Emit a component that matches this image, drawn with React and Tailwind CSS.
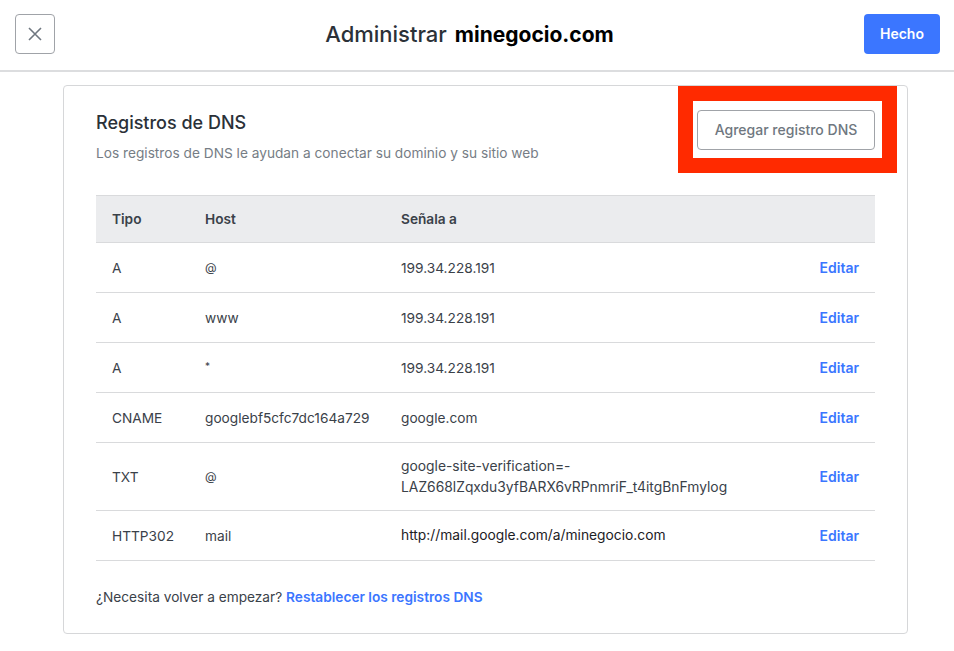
const ROWS = [
  { tipo: 'A', host: '@', points: '199.34.228.191', hostClass: 'pb-[1px] text-xs' },
  { tipo: 'A', host: 'www', points: '199.34.228.191' },
  { tipo: 'A', host: '*', points: '199.34.228.191', hostClass: 'pb-[3px] text-[10px]' },
  { tipo: 'CNAME', host: 'googlebf5cfc7dc164a729', points: 'google.com' },
  { tipo: 'TXT', host: '@', points: 'google-site-verification=-\nLAZ668lZqxdu3yfBARX6vRPnmriF_t4itgBnFmylog', hostClass: 'pb-[1px] text-xs', tall: true },
  { tipo: 'HTTP302', host: 'mail', points: 'http://mail.google.com/a/minegocio.com', dark: true },
];

export default function App() {
  return (
    <div className="relative h-[651px] w-[954px] overflow-hidden bg-white font-['Inter',sans-serif] text-[#3a4149]">
      {/* Header */}
      <header className="flex h-[72px] items-start justify-between border-b-2 border-[#dcdddf] pt-[14px] pr-[14px] pl-[15px]">
        <button className="flex h-10 w-10 items-center justify-center rounded border border-[#a0a3a8] text-[#6f7780]">
          <svg className="h-4 w-4" fill="none" stroke="currentColor" viewBox="0 0 16 16">
            <path strokeWidth={1.6} d="M2 2l12 12M14 2L2 14" />
          </svg>
        </button>
        <h1 className="mt-[6px] ml-[20px] flex items-baseline gap-2 text-[22px] leading-[28px] font-medium text-[#2b3138]">
          Administrar <span className="text-[21px] font-bold text-black">minegocio.com</span>
        </h1>
        <button className="h-10 w-[76px] rounded bg-[#3b76ff] text-sm font-semibold text-white">Hecho</button>
      </header>

      {/* Card */}
      <main className="mt-[13px] ml-[63px] h-[549px] w-[845px] rounded border border-[#d6d7d9] px-8">
        <div className="flex items-start justify-between pt-[24px]">
          <div>
            <h2 className="mt-[1px] text-lg leading-6 font-medium text-[#2b3138]">Registros de DNS</h2>
            <p className="mt-[8px] text-[13.7px] leading-5 text-[#767d85]">
              Los registros de DNS le ayudan a conectar su dominio y su sitio web
            </p>
          </div>
          <button className="h-10 w-[178px] rounded border border-[#a0a3a8] text-sm font-medium text-[#6f7780]">
            Agregar registro DNS
          </button>
        </div>

        <table className="mt-[32px] w-full table-fixed border-collapse text-left text-[13.7px]">
          <colgroup>
            <col className="w-[109px]" />
            <col className="w-[196px]" />
            <col />
            <col className="w-[80px]" />
          </colgroup>
          <thead>
            <tr className="h-[47px] border-y border-[#d9dadc] bg-[#ebecee] [&>th]:pt-[1px]">
              <th className="pl-4 font-semibold">Tipo</th>
              <th className="font-semibold">Host</th>
              <th className="font-semibold">Señala a</th>
              <th />
            </tr>
          </thead>
          <tbody>
            {ROWS.map((row, i) => (
              <tr key={i} className={`border-b border-[#d9dadc] [&>td]:pt-[1px] ${row.tall ? 'h-[68px]' : 'h-[50px]'}`}>
                <td className="pl-4">{row.tipo}</td>
                <td className={row.hostClass}>{row.host}</td>
                <td className={`whitespace-pre-line leading-[21px] ${row.tall ? 'text-[13.85px]' : ''} ${row.dark ? 'pb-[1px] text-[13.8px] text-[#1c2025]' : ''}`}>{row.points}</td>
                <td className="pr-4 text-right text-sm font-semibold text-[#3b76ff]">Editar</td>
              </tr>
            ))}
          </tbody>
        </table>

        <p className="mt-[26px] text-[13.7px] leading-5">
          ¿Necesita volver a empezar?{' '}
          <a className="font-semibold text-[#3b76ff]">Restablecer los registros DNS</a>
        </p>
      </main>

      {/* Red annotation around the button */}
      <div className="absolute top-[86px] left-[678px] h-[87px] w-[219px] border-[15px] border-[#ff2a00]" />
    </div>
  );
}
